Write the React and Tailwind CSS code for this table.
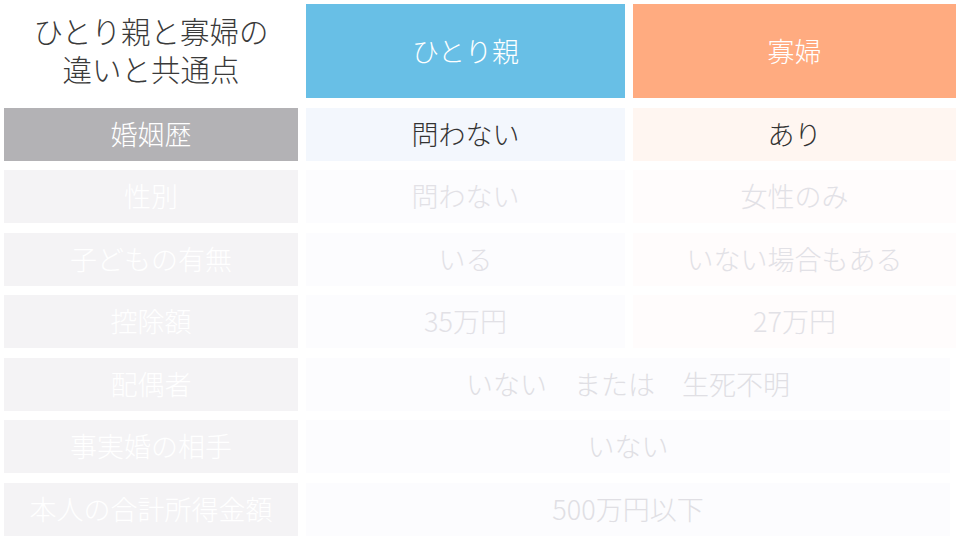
import React from "react";

const font = { fontFamily: '"Noto Sans CJK JP", "Noto Sans", sans-serif' };

const fadedRows = [
  { label: "性別", a: "問わない", b: "女性のみ" },
  { label: "子どもの有無", a: "いる", b: "いない場合もある" },
  { label: "控除額", a: "35万円", b: "27万円" },
];

const spanRows = [
  { label: "配偶者", v: "いない　または　生死不明" },
  { label: "事実婚の相手", v: "いない" },
  { label: "本人の合計所得金額", v: "500万円以下" },
];

export default function App() {
  return (
    <div
      className="w-[960px] h-[540px] bg-white overflow-hidden pl-1 pt-1 font-light"
      style={font}
    >
      <div className="grid grid-cols-[294px_319px_323px] gap-x-2 gap-y-[9.5px] grid-rows-[94px_53px_53px_53px_53px_53px_53px_53px]">
        <div className="flex flex-col items-center justify-center text-[29.5px] leading-[38px] text-[#3a3a3a] -mt-1">
          <div>ひとり親と寡婦の</div>
          <div>違いと共通点</div>
        </div>
        <div className="bg-[#68bfe6] flex items-center justify-center text-white text-[27px]">
          ひとり親
        </div>
        <div className="bg-[#ffab80] flex items-center justify-center text-white text-[27px]">
          寡婦
        </div>

        <div className="bg-[#b3b2b5] flex items-center justify-center text-white text-[27px]">
          婚姻歴
        </div>
        <div className="bg-[#f3f7fd] flex items-center justify-center text-[#333333] text-[27px]">
          問わない
        </div>
        <div className="bg-[#fff6f1] flex items-center justify-center text-[#333333] text-[27px]">
          あり
        </div>

        {fadedRows.map((r) => (
          <React.Fragment key={r.label}>
            <div className="bg-[#f4f3f5] flex items-center justify-center text-white text-[27px]">
              {r.label}
            </div>
            <div className="bg-[#fcfcfe] flex items-center justify-center text-[#e2e1e6] text-[27px]">
              {r.a}
            </div>
            <div className="bg-[#fffcfc] flex items-center justify-center text-[#e2e1e6] text-[27px]">
              {r.b}
            </div>
          </React.Fragment>
        ))}

        {spanRows.map((r) => (
          <React.Fragment key={r.label}>
            <div className="bg-[#f4f3f5] flex items-center justify-center text-white text-[27px]">
              {r.label}
            </div>
            <div className="col-span-2 bg-[#fcfcfe] flex items-center justify-center text-[#e0dfe4] text-[27px] mr-[6px]">
              {r.v}
            </div>
          </React.Fragment>
        ))}
      </div>
    </div>
  );
}
